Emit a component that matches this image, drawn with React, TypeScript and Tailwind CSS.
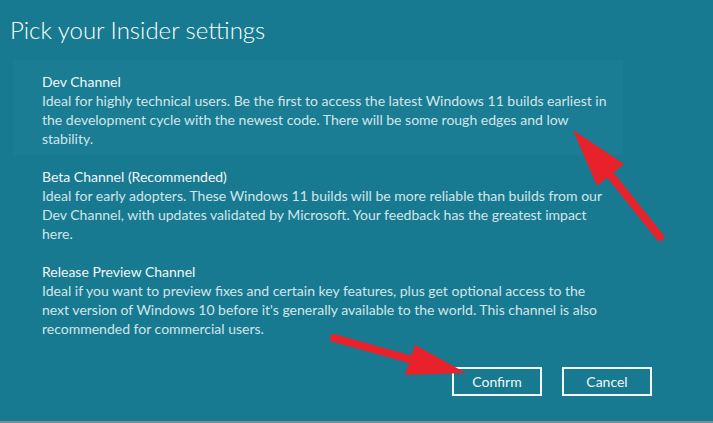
import React from "react";

const items = [
  {
    title: "Dev Channel",
    lines: [
      "Ideal for highly technical users. Be the first to access the latest Windows 11 builds earliest in",
      "the development cycle with the newest code. There will be some rough edges and low",
      "stability.",
    ],
    selected: true,
  },
  {
    title: "Beta Channel (Recommended)",
    lines: [
      "Ideal for early adopters. These Windows 11 builds will be more reliable than builds from our",
      "Dev Channel, with updates validated by Microsoft. Your feedback has the greatest impact",
      "here.",
    ],
    selected: false,
  },
  {
    title: "Release Preview Channel",
    lines: [
      "Ideal if you want to preview fixes and certain key features, plus get optional access to the",
      "next version of Windows 10 before it's generally available to the world. This channel is also",
      "recommended for commercial users.",
    ],
    selected: false,
  },
];

export default function App() {
  return (
    <div
      className="relative w-[713px] h-[423px] bg-[#187a90] overflow-hidden flex flex-col"
      style={{ fontFamily: "Lato, 'Open Sans', sans-serif" }}
    >
      <div className="h-[51px] pl-[10px] pt-[15px] text-[24px] font-light leading-[30px] text-white">
        Pick your Insider settings
      </div>
      <div className="pt-[9px] pl-[14px] flex flex-col">
        {items.map((it) => (
          <div
            key={it.title}
            className={
              "w-[609px] h-[95px] pl-[28px] pt-[12px] text-[14px] leading-[19px] " +
              (it.selected ? "bg-[#1a7d93]" : "")
            }
          >
            <div className="text-[#f2f7f8] whitespace-nowrap">{it.title}</div>
            {it.lines.map((l) => (
              <div key={l} className="text-[#d2e5ea] whitespace-nowrap">
                {l}
              </div>
            ))}
          </div>
        ))}
      </div>
      <div className="flex justify-end gap-[20px] pr-[61px] pt-[22px]">
        <button className="w-[90px] h-[29px] border-2 border-[#f4f8f9] text-[14px] text-[#f2f7f8]">
          Confirm
        </button>
        <button className="w-[90px] h-[29px] border-2 border-[#f4f8f9] text-[14px] text-[#f2f7f8]">
          Cancel
        </button>
      </div>
      <div className="mt-auto h-[2px] bg-[#7f8d90]" />
      <svg
        className="absolute left-0 top-0 pointer-events-none"
        width="713"
        height="423"
        viewBox="0 0 713 423"
      >
        <line x1="660" y1="237" x2="608" y2="172" stroke="#e8212a" strokeWidth="8" strokeLinecap="round" />
        <polygon points="573,130 624,164 597,186" fill="#e8212a" />
        <line x1="334" y1="338" x2="420" y2="362" stroke="#e8212a" strokeWidth="8" strokeLinecap="round" />
        <polygon points="415,345 466,373 405,375" fill="#e8212a" />
      </svg>
    </div>
  );
}
